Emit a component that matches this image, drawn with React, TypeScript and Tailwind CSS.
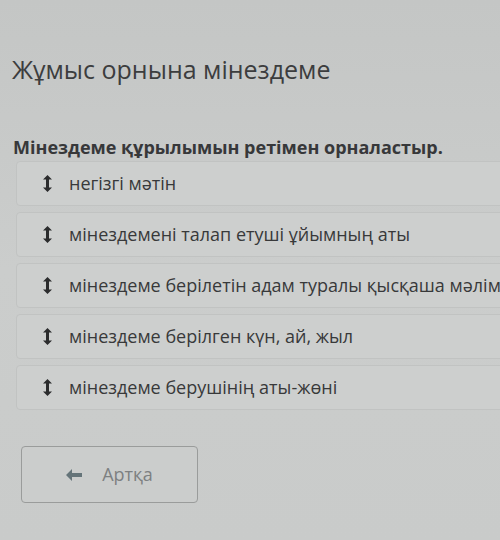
const items = [
  "негізгі мәтін",
  "мінездемені талап етуші ұйымның аты",
  "мінездеме берілетін адам туралы қысқаша мәлімет",
  "мінездеме берілген күн, ай, жыл",
  "мінездеме берушінің аты-жөні",
];

function DragIcon() {
  return (
    <svg width="9" height="17" viewBox="0 0 9 17" className="shrink-0">
      <path d="M4.5 0 L9 4.5 H6 V12.5 H9 L4.5 17 L0 12.5 H3 V4.5 H0 Z" fill="#2b2c2d" />
    </svg>
  );
}

export default function App() {
  return (
    <div
      className="w-[500px] h-[540px] overflow-hidden bg-gradient-to-b from-[#c4c6c5] via-[#cbcdcc] to-[#c9cbca] text-[#3a3b3c]"
      style={{ fontFamily: '"Open Sans", "Noto Sans", sans-serif' }}
    >
      <h1 className="pt-[51px] pl-[12px] text-[25px] leading-[36px] text-[#3c3d3e]">Жұмыс орнына мінездеме</h1>

      <p className="mt-[48px] pl-[13px] text-[18px] font-bold leading-[24px] text-[#37383a]">
        Мінездеме құрылымын ретімен орналастыр.
      </p>

      <div className="mt-[2px] ml-[16px] w-[520px] flex flex-col gap-[6px]">
        {items.map((t) => (
          <div
            key={t}
            className="h-[45px] flex items-center gap-[17px] pl-[26px] rounded-[4px] border border-[#c1c3c2] bg-[#cdcfce] whitespace-nowrap"
          >
            <DragIcon />
            <span className="text-[18px] text-[#38393a]">{t}</span>
          </div>
        ))}
      </div>

      <div className="mt-[36px] ml-[21px]">
        <button className="w-[177px] h-[57px] flex items-center justify-center gap-[20px] rounded-[4px] border border-[#9a9c9b] bg-[#cbcdcc] text-[#7d8081]">
          <svg width="16" height="12" viewBox="0 0 16 12">
            <path d="M0 6 L6 0 V4 H16 V8 H6 V12 Z" fill="#657479" />
          </svg>
          <span className="text-[18px]">Артқа</span>
        </button>
      </div>
    </div>
  );
}
